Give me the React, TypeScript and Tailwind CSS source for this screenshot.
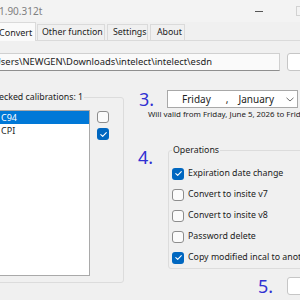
import React from "react";

const Check = ({ checked }: { checked?: boolean }) =>
  checked ? (
    <div className="w-[12px] h-[12px] rounded-[3px] bg-[#0067c0] flex items-center justify-center shrink-0">
      <svg width="9" height="9" viewBox="0 0 9 9">
        <path d="M1.8 4.6 L3.7 6.4 L7.3 2.6" fill="none" stroke="white" strokeWidth="1.1" strokeLinecap="round" strokeLinejoin="round" />
      </svg>
    </div>
  ) : (
    <div className="w-[12px] h-[12px] rounded-[3px] border border-[#8d8d8d] bg-[#fbfbfb] shrink-0" />
  );

const ops: [string, boolean][] = [
  ["Expiration date change", true],
  ["Convert to insite v7", false],
  ["Convert to insite v8", false],
  ["Password delete", false],
  ["Copy modified incal to another", true],
];

export default function App() {
  return (
    <div className="w-[300px] h-[300px] overflow-hidden bg-[#f0f0f0] text-[#222] font-['Noto_Sans',sans-serif] text-[8.8px] leading-none">
      {/* title bar */}
      <div className="h-[22px] flex items-center bg-[#f3f3f3]">
        <span className="-ml-[1px] text-[10px] text-[#808080] whitespace-nowrap">1.90.312t</span>
        <div className="ml-auto w-[8px] h-px bg-[#555] shrink-0" />
        <div className="ml-[33px] -mr-[6px] w-[10px] h-[10px] border border-[#d2d2d2] shrink-0" />
      </div>

      {/* tabs */}
      <div className="h-[18px] flex items-end">
        <div className="-ml-[8px] w-[44px] h-[19px] shrink-0 bg-[#fafafa] border border-b-0 border-[#dadada] flex items-center pl-[6px] -mb-px relative text-[9px]">
          Convert
        </div>
        <div className="ml-[1px] w-[68px] h-[16px] shrink-0 bg-[#f0f0f0] border border-b-0 border-[#dadada] flex items-center pl-[4px] whitespace-nowrap">
          Other function
        </div>
        <div className="ml-[2px] w-[41px] h-[16px] shrink-0 bg-[#f0f0f0] border border-b-0 border-[#dadada] flex items-center pl-[5px]">
          Settings
        </div>
        <div className="ml-[2px] w-[35px] h-[16px] shrink-0 bg-[#f0f0f0] border border-b-0 border-[#dadada] flex items-center pl-[6px]">
          About
        </div>
      </div>

      {/* tab page */}
      <div className="border-t border-[#dadada] bg-[#f0f0f0] h-[260px]">
        {/* path row */}
        <div className="mt-[12px] flex items-center h-[18px]">
          <div className="-ml-[10px] w-[290px] h-[18px] shrink-0 bg-[#fafafa] border border-[#d0d0d0] border-b-[#8f8f8f] flex items-center pl-[3px] text-[9.4px] whitespace-nowrap">
            Users\NEWGEN\Downloads\intelect\intelect\esdn
          </div>
          <div className="ml-[7px] w-[24px] h-[18px] shrink-0 bg-white border border-[#c6c6c6] rounded-[3px]" />
        </div>

        {/* main */}
        <div className="mt-[19px] flex">
          <fieldset className="-ml-[20px] mt-[1px] w-[144px] h-[192px] shrink-0 border border-[#dcdcdc] rounded-[3px]">
            <legend className="ml-[6px] px-[1px] leading-[12px] whitespace-nowrap">Checked calibrations: 1</legend>
            <div className="flex">
              <div className="mt-[7px] w-[109px] h-[166px] shrink-0 bg-white border border-[#a9a9a9]">
                <div className="h-[13px] bg-[#0078d7] text-white flex items-center pl-[19px] text-[9px]">C94</div>
                <div className="h-[13px] flex items-center pl-[19px] text-[9px]">CPI</div>
              </div>
              <div className="ml-[7px] flex flex-col">
                <div className="mt-[8px]">
                  <Check />
                </div>
                <div className="mt-[5px]">
                  <Check checked />
                </div>
              </div>
            </div>
          </fieldset>

          <div className="flex-1 flex flex-col min-w-0">
            <div className="h-[18px] flex items-center">
              <div className="ml-[15px] w-[28px] shrink-0 text-[18px] leading-[18px] text-[#3030d2]">3.</div>
              <div className="w-[131px] h-[18px] shrink-0 bg-white border border-[#a8a8a8] flex items-center text-[10px] whitespace-nowrap">
                <span className="ml-[14px]">Friday</span>
                <span className="ml-[15px]">,</span>
                <span className="ml-[10px]">January</span>
                <svg className="ml-auto mr-[3px]" width="8" height="5" viewBox="0 0 8 5">
                  <path d="M0.5 0.8 L4 4 L7.5 0.8" fill="none" stroke="#606060" strokeWidth="0.9" />
                </svg>
              </div>
            </div>
            <div className="mt-[2px] ml-[24px] text-[7.9px] leading-[9px] whitespace-nowrap text-[#222]">
              Will valid from Friday, June 5, 2026 to Friday, January 1, 2027
            </div>

            <div className="mt-[25px] flex">
              <div className="ml-[14px] w-[30px] shrink-0 mt-[4px] text-[18px] leading-[18px] text-[#3030d2]">4.</div>
              <fieldset className="w-[200px] h-[125px] shrink-0 border border-[#dcdcdc] rounded-[3px]">
                <legend className="ml-[3px] px-[1px] leading-[12px]">Operations</legend>
                <div className="mt-[7px] flex flex-col">
                  {ops.map(([label, c]) => (
                    <div key={label} className="h-[21px] flex items-center pl-[3px] whitespace-nowrap">
                      <Check checked={c} />
                      <span className="ml-[4px]">{label}</span>
                    </div>
                  ))}
                </div>
              </fieldset>
            </div>

            <div className="mt-[8px] h-[18px] flex items-center">
              <div className="ml-[134px] w-[29px] shrink-0 text-[18px] leading-[18px] text-[#3030d2]">5.</div>
              <div className="w-[24px] h-[18px] shrink-0 bg-white border border-[#c6c6c6] rounded-[3px]" />
            </div>
          </div>
        </div>
      </div>
    </div>
  );
}
